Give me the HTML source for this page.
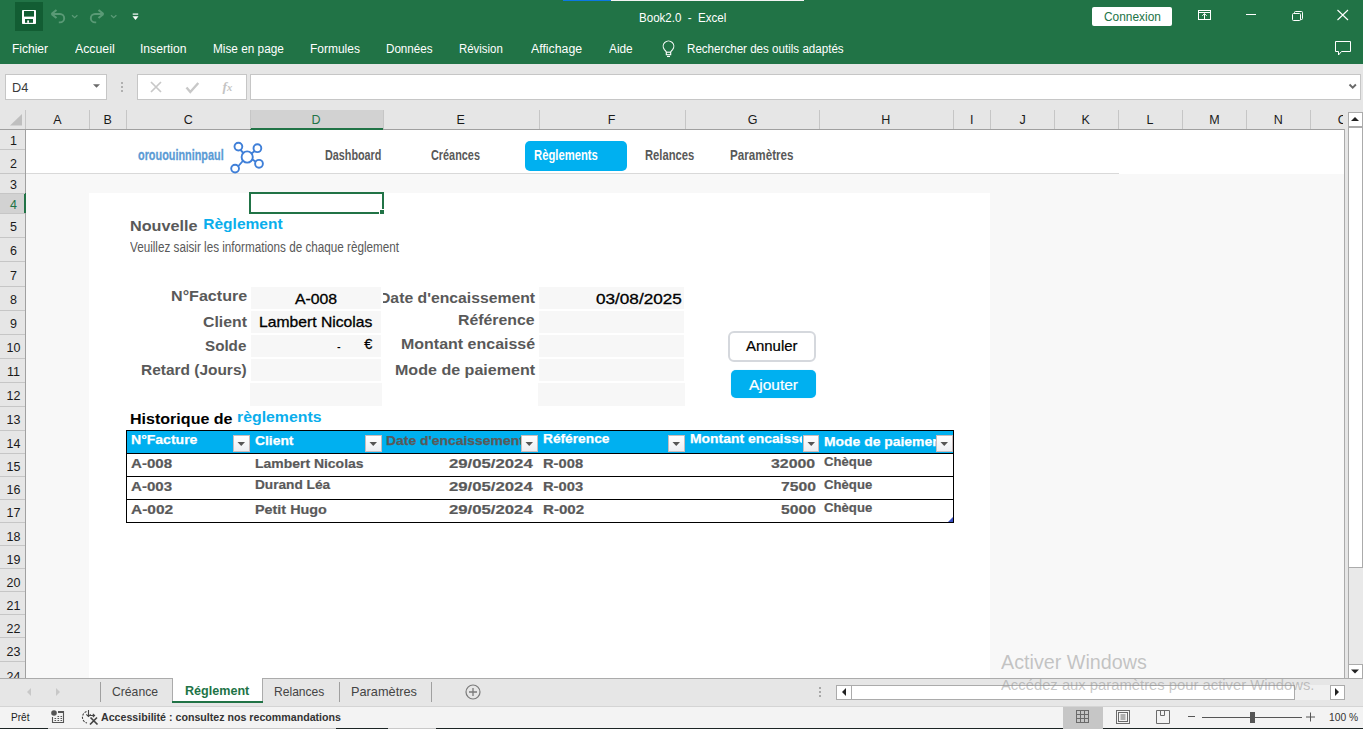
<!DOCTYPE html>
<html><head><meta charset="utf-8">
<style>
*{margin:0;padding:0;box-sizing:border-box}
html,body{width:1363px;height:729px;overflow:hidden;background:#e6e6e6;font-family:"Liberation Sans",sans-serif}
.a{position:absolute}
.t{position:absolute;white-space:pre;line-height:1;transform-origin:0 0}
.clip{position:absolute;left:0;top:0;width:1363px;height:729px}
</style></head><body>
<!-- title bar + ribbon -->
<div class="a" style="left:0;top:0;width:1363px;height:64px;background:#217346"></div>
<div class="a" style="left:563px;top:0;width:48px;height:1px;background:#0b78e3"></div>
<div class="a" style="left:611px;top:0;width:193px;height:1px;background:#f4f4f4"></div>
<div class="a" style="left:15px;top:2px;width:28px;height:29px;background:#125d33"></div>
<svg class="a" style="left:0;top:0" width="1363" height="63">
  <!-- save -->
  <rect x="22" y="10" width="14" height="14" rx="0.8" fill="#fff"/>
  <rect x="24" y="11" width="10" height="5.6" fill="#125d33"/>
  <rect x="25" y="19" width="8" height="3.8" fill="#125d33"/>
  <rect x="27.2" y="20.4" width="1.8" height="2.4" fill="#fff"/>
  <!-- undo -->
  <g fill="none" stroke="#5a9a76" stroke-width="1.9">
    <path d="M51.5 14 L56.5 10 M51.5 14 L56.5 18" stroke-width="2.2"/>
    <path d="M52.5 14 H60 a4.2 4.2 0 0 1 0 8.4 h-1.2"/>
    <path d="M72 15.3 l2.7 2.4 l2.7 -2.4" stroke-width="1.3"/>
    <path d="M103.5 14 L98.5 10 M103.5 14 L98.5 18" stroke-width="2.2"/>
    <path d="M102.5 14 H95 a4.2 4.2 0 0 0 0 8.4 h1.2"/>
    <path d="M111 15.3 l2.7 2.4 l2.7 -2.4" stroke-width="1.3"/>
  </g>
  <!-- customize -->
  <rect x="132.7" y="13.5" width="5.5" height="1.2" fill="#fff"/>
  <path d="M132.5 16.2 h6 l-3 3.8z" fill="#fff"/>
  <!-- ribbon display options -->
  <g fill="none" stroke="#fff" stroke-width="1">
    <rect x="1198.5" y="10.5" width="12" height="9"/>
    <path d="M1198.5 12.5 h12"/>
    <path d="M1204.5 19 v-5.5 M1202.3 15.8 l2.2 -2.2 l2.2 2.2"/>
    <path d="M1246 14.5 h10"/>
    <rect x="1292.5" y="13.5" width="8" height="7" rx="1"/>
    <path d="M1294.5 13.5 v-1 a1 1 0 0 1 1 -1 h6 a1 1 0 0 1 1 1 v6 a1 1 0 0 1 -1 1 h-1"/>
    <path d="M1337.5 10 l10.5 10 M1348 10 l-10.5 10" stroke-width="1.1"/>
    <!-- comment icon -->
    <path d="M1335.5 41.5 h15 v10 h-9 l-3 3.5 v-3.5 h-3z"/>
  </g>
  <!-- lightbulb -->
  <g fill="none" stroke="#fff" stroke-width="1.1">
    <path d="M666.4 51.8 L664.4 49.6 A5.3 5.3 0 1 1 672.6 49.6 L670.6 51.8"/>
    <rect x="666.3" y="52.2" width="4.4" height="2.5"/>
    <path d="M667 56.5 h3"/>
  </g>
</svg>
<div class="a" style="left:1092px;top:7px;width:80px;height:19px;background:#fff;border-radius:2px"></div>

<!-- formula bar area -->
<div class="a" style="left:0;top:64px;width:1363px;height:46px;background:#e6e6e6"></div>
<div class="a" style="left:5px;top:74px;width:102px;height:26px;background:#fff;border:1px solid #c6c6c6"></div>

<div class="a" style="left:137px;top:74px;width:110px;height:26px;background:#fff;border:1px solid #c6c6c6"></div>
<div class="a" style="left:250px;top:74px;width:1111px;height:26px;background:#fff;border:1px solid #c6c6c6"></div>
<svg class="a" style="left:0;top:63px" width="1363" height="47">
  <path d="M93 21.2 h7 l-3.5 3.5z" fill="#6a6a6a"/>
  <g fill="#b0b0b0"><rect x="121" y="19" width="2" height="2"/><rect x="121" y="23" width="2" height="2"/><rect x="121" y="27" width="2" height="2"/></g>
  <g fill="none" stroke="#c8c8c8" stroke-width="1.7">
    <path d="M151 19 l10 10 M161 19 l-10 10"/>
    <path d="M186.5 24.5 l3.8 4.5 l8 -9" stroke-width="2.4"/>
  </g>
  <text x="222.5" y="28" font-family="Liberation Serif" font-style="italic" font-weight="bold" font-size="13.5" fill="#c4c4c4">f</text>
  <text x="227" y="28" font-family="Liberation Serif" font-style="italic" font-weight="bold" font-size="10.5" fill="#c4c4c4">x</text>
  <path d="M1349.5 21.5 l3.2 3.2 l3.2 -3.2" fill="none" stroke="#6a6a6a" stroke-width="1.9"/>
</svg>

<!-- sheet area -->
<div class="a" style="left:26px;top:129px;width:1319px;height:549px;background:#f8f8f8"></div>
<div class="a" style="left:26px;top:129px;width:1319px;height:45px;background:#fff"></div>
<div class="a" style="left:26px;top:173px;width:1093px;height:1px;background:#d9d9d9"></div>
<div class="a" style="left:89px;top:193px;width:901px;height:485px;background:#fff"></div>

<!-- column header -->
<div class="a" style="left:0;top:110px;width:1348px;height:20px;background:#e6e6e6;border-bottom:1px solid #a0a0a0"></div>
<div class="a" style="left:250px;top:110px;width:133px;height:20px;background:#d2d2d2;border-bottom:2px solid #217346"></div>
<svg class="a" style="left:0;top:110px" width="1348" height="20" id="colhdr">
  <path d="M10 15.5 h12 v-11.5z" fill="#bfbfbf"/>
  <g stroke="#c6c6c6" stroke-width="1">
  <path d="M25.5 0 V19"/><path d="M89.5 0 V19"/>
<path d="M126.5 0 V19"/>
<path d="M250.5 0 V19"/>
<path d="M383.5 0 V19"/>
<path d="M539.5 0 V19"/>
<path d="M685.5 0 V19"/>
<path d="M819.5 0 V19"/>
<path d="M953.5 0 V19"/>
<path d="M990.5 0 V19"/>
<path d="M1054.5 0 V19"/>
<path d="M1118.5 0 V19"/>
<path d="M1182.5 0 V19"/>
<path d="M1246.5 0 V19"/>
<path d="M1310.5 0 V19"/>
  </g>
</svg>
<div class="clip" style="clip-path:inset(0 20px 0 0)"><span class="t" style="left:53.30px;top:114.42px;font-size:12.5px;font-weight:normal;color:#1a1a1a;">A</span>
<span class="t" style="left:103.55px;top:114.42px;font-size:12.5px;font-weight:normal;color:#1a1a1a;">B</span>
<span class="t" style="left:183.75px;top:114.42px;font-size:12.5px;font-weight:normal;color:#1a1a1a;">C</span>
<span class="t" style="left:311.50px;top:114.42px;font-size:12.5px;font-weight:normal;color:#217346;">D</span>
<span class="t" style="left:456.50px;top:114.42px;font-size:12.5px;font-weight:normal;color:#1a1a1a;">E</span>
<span class="t" style="left:607.75px;top:114.42px;font-size:12.5px;font-weight:normal;color:#1a1a1a;">F</span>
<span class="t" style="left:747.75px;top:114.42px;font-size:12.5px;font-weight:normal;color:#1a1a1a;">G</span>
<span class="t" style="left:881.30px;top:114.42px;font-size:12.5px;font-weight:normal;color:#1a1a1a;">H</span>
<span class="t" style="left:970.10px;top:114.42px;font-size:12.5px;font-weight:normal;color:#1a1a1a;">I</span>
<span class="t" style="left:1019.60px;top:114.42px;font-size:12.5px;font-weight:normal;color:#1a1a1a;">J</span>
<span class="t" style="left:1081.55px;top:114.42px;font-size:12.5px;font-weight:normal;color:#1a1a1a;">K</span>
<span class="t" style="left:1146.60px;top:114.42px;font-size:12.5px;font-weight:normal;color:#1a1a1a;">L</span>
<span class="t" style="left:1209.15px;top:114.42px;font-size:12.5px;font-weight:normal;color:#1a1a1a;">M</span>
<span class="t" style="left:1273.70px;top:114.42px;font-size:12.5px;font-weight:normal;color:#1a1a1a;">N</span>
<span class="t" style="left:1337.80px;top:114.42px;font-size:12.5px;font-weight:normal;color:#1a1a1a;">O</span></div>

<!-- row header -->
<div class="a" style="left:0;top:130px;width:26px;height:548px;background:#e6e6e6;border-right:1px solid #a0a0a0"></div>
<div class="a" style="left:0;top:193px;width:26px;height:20px;background:#d2d2d2;border-right:2px solid #217346"></div>
<svg class="a" style="left:0;top:129px" width="26" height="549">
  <g stroke="#c6c6c6" stroke-width="1">
  <path d="M0 20.5 H25"/>
<path d="M0 44.5 H25"/>
<path d="M0 64.5 H25"/>
<path d="M0 84.5 H25"/>
<path d="M0 108.5 H25"/>
<path d="M0 132.5 H25"/>
<path d="M0 157.5 H25"/>
<path d="M0 181.5 H25"/>
<path d="M0 205.5 H25"/>
<path d="M0 229.5 H25"/>
<path d="M0 253.5 H25"/>
<path d="M0 277.5 H25"/>
<path d="M0 301.5 H25"/>
<path d="M0 324.5 H25"/>
<path d="M0 347.5 H25"/>
<path d="M0 370.5 H25"/>
<path d="M0 393.5 H25"/>
<path d="M0 416.5 H25"/>
<path d="M0 439.5 H25"/>
<path d="M0 462.5 H25"/>
<path d="M0 485.5 H25"/>
<path d="M0 508.5 H25"/>
<path d="M0 532.5 H25"/>
  </g>
</svg>
<div class="clip" style="clip-path:inset(129px 0 51px 0)"><span class="t" style="left:10.00px;top:135.27px;font-size:12.5px;font-weight:normal;color:#1a1a1a;">1</span>
<span class="t" style="left:10.00px;top:157.67px;font-size:12.5px;font-weight:normal;color:#1a1a1a;">2</span>
<span class="t" style="left:10.00px;top:179.47px;font-size:12.5px;font-weight:normal;color:#1a1a1a;">3</span>
<span class="t" style="left:10.00px;top:199.32px;font-size:12.5px;font-weight:normal;color:#217346;">4</span>
<span class="t" style="left:10.00px;top:221.22px;font-size:12.5px;font-weight:normal;color:#1a1a1a;">5</span>
<span class="t" style="left:10.00px;top:245.17px;font-size:12.5px;font-weight:normal;color:#1a1a1a;">6</span>
<span class="t" style="left:10.00px;top:269.87px;font-size:12.5px;font-weight:normal;color:#1a1a1a;">7</span>
<span class="t" style="left:10.00px;top:294.47px;font-size:12.5px;font-weight:normal;color:#1a1a1a;">8</span>
<span class="t" style="left:10.00px;top:318.42px;font-size:12.5px;font-weight:normal;color:#1a1a1a;">9</span>
<span class="t" style="left:6.52px;top:342.37px;font-size:12.5px;font-weight:normal;color:#1a1a1a;">10</span>
<span class="t" style="left:6.99px;top:366.47px;font-size:12.5px;font-weight:normal;color:#1a1a1a;">11</span>
<span class="t" style="left:6.52px;top:390.47px;font-size:12.5px;font-weight:normal;color:#1a1a1a;">12</span>
<span class="t" style="left:6.52px;top:414.47px;font-size:12.5px;font-weight:normal;color:#1a1a1a;">13</span>
<span class="t" style="left:6.52px;top:438.02px;font-size:12.5px;font-weight:normal;color:#1a1a1a;">14</span>
<span class="t" style="left:6.52px;top:461.02px;font-size:12.5px;font-weight:normal;color:#1a1a1a;">15</span>
<span class="t" style="left:6.52px;top:484.07px;font-size:12.5px;font-weight:normal;color:#1a1a1a;">16</span>
<span class="t" style="left:6.52px;top:506.87px;font-size:12.5px;font-weight:normal;color:#1a1a1a;">17</span>
<span class="t" style="left:6.52px;top:530.72px;font-size:12.5px;font-weight:normal;color:#1a1a1a;">18</span>
<span class="t" style="left:6.52px;top:554.02px;font-size:12.5px;font-weight:normal;color:#1a1a1a;">19</span>
<span class="t" style="left:6.52px;top:576.87px;font-size:12.5px;font-weight:normal;color:#1a1a1a;">20</span>
<span class="t" style="left:6.52px;top:599.82px;font-size:12.5px;font-weight:normal;color:#1a1a1a;">21</span>
<span class="t" style="left:6.52px;top:622.92px;font-size:12.5px;font-weight:normal;color:#1a1a1a;">22</span>
<span class="t" style="left:6.52px;top:646.12px;font-size:12.5px;font-weight:normal;color:#1a1a1a;">23</span>
<span class="t" style="left:6.52px;top:670.72px;font-size:12.5px;font-weight:normal;color:#1a1a1a;">24</span></div>

<!-- right grid border + vertical scrollbar -->
<div class="a" style="left:1344px;top:129px;width:1px;height:549px;background:#ababab"></div>
<div class="a" style="left:1345px;top:110px;width:18px;height:568px;background:#e6e6e6"></div>
<div class="a" style="left:1348px;top:112px;width:15px;height:566px;background:#e9e9e9;border-left:1px solid #ababab"></div>
<div class="a" style="left:1348px;top:112px;width:15px;height:15px;background:#fff;border:1px solid #ababab"></div>
<div class="a" style="left:1348px;top:127px;width:15px;height:441px;background:#fff;border:1px solid #ababab"></div>
<div class="a" style="left:1348px;top:664px;width:15px;height:15px;background:#fff;border:1px solid #ababab"></div>
<svg class="a" style="left:1348px;top:112px" width="15" height="566">
  <path d="M3 9 h8 l-4 -4z" fill="#222"/>
  <path d="M3 557.5 h8 l-4 4z" fill="#222"/>
</svg>

<!-- header band: logo -->
<svg class="a" style="left:225px;top:138px" width="45" height="40">
  <g fill="none" stroke="#3f7fd8" stroke-width="1.9">
    <circle cx="22.2" cy="19" r="5.6"/>
    <circle cx="13.4" cy="8.6" r="3.9"/>
    <circle cx="32.4" cy="10.2" r="3.9"/>
    <circle cx="34" cy="25.8" r="3.9"/>
    <circle cx="10.1" cy="30.6" r="3.9"/>
    <path d="M15.5 11.8 L18.3 15 M30 12.8 L26.5 15.5 M31 24 L27.5 21.5 M13 28.5 L17.8 23"/>
  </g>
</svg>
<div class="a" style="left:525px;top:141px;width:102px;height:30px;background:#00b0f0;border-radius:5px"></div>

<!-- input boxes -->
<div class="a" style="left:251px;top:287px;width:130px;height:22px;background:#f7f7f7"></div>
<div class="a" style="left:251px;top:311px;width:130px;height:22px;background:#f7f7f7"></div>
<div class="a" style="left:251px;top:335px;width:130px;height:22px;background:#f7f7f7"></div>
<div class="a" style="left:251px;top:359px;width:130px;height:22px;background:#f7f7f7"></div>
<div class="a" style="left:250px;top:383px;width:132px;height:23px;background:#f7f7f7"></div>
<div class="a" style="left:539px;top:287px;width:145px;height:22px;background:#f7f7f7"></div>
<div class="a" style="left:539px;top:311px;width:145px;height:22px;background:#f7f7f7"></div>
<div class="a" style="left:539px;top:335px;width:145px;height:22px;background:#f7f7f7"></div>
<div class="a" style="left:539px;top:359px;width:145px;height:22px;background:#f7f7f7"></div>
<div class="a" style="left:538px;top:383px;width:147px;height:23px;background:#f7f7f7"></div>

<!-- selection -->
<div class="a" style="left:249px;top:192px;width:135px;height:22px;border:2px solid #217346"></div>
<div class="a" style="left:379px;top:209px;width:6px;height:6px;background:#217346;border:1px solid #fff"></div>

<!-- buttons -->
<div class="a" style="left:728px;top:331px;width:88px;height:31px;background:#fff;border:2px solid #d5d8dd;border-radius:6px"></div>
<div class="a" style="left:731px;top:370px;width:85px;height:28px;background:#00b0f0;border-radius:5px;box-shadow:0 0 1px #8fdcf8"></div>

<!-- table -->
<div class="a" style="left:126px;top:430px;width:828px;height:93px;background:#fff;border:1px solid #000"></div>
<div class="a" style="left:127px;top:431px;width:826px;height:22px;background:#00b0f0"></div>
<div class="a" style="left:127px;top:453px;width:826px;height:1px;background:#000"></div>
<div class="a" style="left:127px;top:476px;width:826px;height:1px;background:#000"></div>
<div class="a" style="left:127px;top:499px;width:826px;height:1px;background:#000"></div>
<svg class="a" style="left:948px;top:517px" width="6" height="6"><path d="M5 0 V5 H0z" fill="#3a4fc4"/></svg>

<span class="t" style="left:639.28px;top:12.22px;font-size:12.5px;font-weight:normal;color:#ffffff;transform:scaleX(0.9244);">Book2.0  -  Excel</span>
<span class="t" style="left:1103.50px;top:11.12px;font-size:12.5px;font-weight:normal;color:#217346;transform:scaleX(0.9513);">Connexion</span>
<span class="t" style="left:12.04px;top:43.12px;font-size:12.5px;font-weight:normal;color:#ffffff;transform:scaleX(0.9603);">Fichier</span>
<span class="t" style="left:74.80px;top:43.12px;font-size:12.5px;font-weight:normal;color:#ffffff;transform:scaleX(0.9844);">Accueil</span>
<span class="t" style="left:140.03px;top:43.12px;font-size:12.5px;font-weight:normal;color:#ffffff;transform:scaleX(0.9704);">Insertion</span>
<span class="t" style="left:213.06px;top:43.12px;font-size:12.5px;font-weight:normal;color:#ffffff;transform:scaleX(0.9434);">Mise en page</span>
<span class="t" style="left:310.24px;top:43.12px;font-size:12.5px;font-weight:normal;color:#ffffff;transform:scaleX(0.9578);">Formules</span>
<span class="t" style="left:386.37px;top:43.12px;font-size:12.5px;font-weight:normal;color:#ffffff;transform:scaleX(0.9306);">Données</span>
<span class="t" style="left:459.49px;top:43.12px;font-size:12.5px;font-weight:normal;color:#ffffff;transform:scaleX(0.9131);">Révision</span>
<span class="t" style="left:530.70px;top:43.12px;font-size:12.5px;font-weight:normal;color:#ffffff;transform:scaleX(0.9857);">Affichage</span>
<span class="t" style="left:609.30px;top:43.12px;font-size:12.5px;font-weight:normal;color:#ffffff;transform:scaleX(0.9455);">Aide</span>
<span class="t" style="left:687.37px;top:43.12px;font-size:12.5px;font-weight:normal;color:#ffffff;transform:scaleX(0.9278);">Rechercher des outils adaptés</span>
<span class="t" style="left:11.98px;top:82.02px;font-size:12.5px;font-weight:normal;color:#3a3a3a;transform:scaleX(1.0182);">D4</span>
<span class="t" style="left:138.00px;top:146.58px;font-size:15.5px;font-weight:bold;color:#5B9BD5;-webkit-text-stroke:0.3px #5B9BD5;transform:scaleX(0.7011);">orououinninpaul</span>
<span class="t" style="left:325.30px;top:146.98px;font-size:15.5px;font-weight:bold;color:#595959;transform:scaleX(0.6969);">Dashboard</span>
<span class="t" style="left:430.60px;top:146.98px;font-size:15.5px;font-weight:bold;color:#595959;transform:scaleX(0.7011);">Créances</span>
<span class="t" style="left:533.77px;top:146.98px;font-size:15.5px;font-weight:bold;color:#ffffff;transform:scaleX(0.7270);">Règlements</span>
<span class="t" style="left:645.27px;top:146.98px;font-size:15.5px;font-weight:bold;color:#595959;transform:scaleX(0.7254);">Relances</span>
<span class="t" style="left:730.05px;top:146.98px;font-size:15.5px;font-weight:bold;color:#595959;transform:scaleX(0.7522);">Paramètres</span>
<span class="t" style="left:129.55px;top:217.58px;font-size:15.5px;font-weight:bold;color:#595959;transform:scaleX(1.0456);">Nouvelle</span>
<span class="t" style="left:203.30px;top:216.08px;font-size:15.5px;font-weight:bold;color:#0AAEEC;">Règlement</span>
<span class="t" style="left:129.90px;top:240.52px;font-size:13.8px;font-weight:normal;color:#595959;transform:scaleX(0.8474);">Veuillez saisir les informations de chaque règlement</span>
<span class="t" style="left:170.53px;top:287.90px;font-size:15px;font-weight:bold;color:#595959;transform:scaleX(1.0736);">N°Facture</span>
<span class="t" style="left:202.50px;top:314.00px;font-size:15px;font-weight:bold;color:#595959;transform:scaleX(1.0535);">Client</span>
<span class="t" style="left:205.40px;top:338.30px;font-size:15px;font-weight:bold;color:#595959;transform:scaleX(1.0124);">Solde</span>
<span class="t" style="left:140.77px;top:362.10px;font-size:15px;font-weight:bold;color:#595959;transform:scaleX(1.0303);">Retard (Jours)</span>
<span class="t" style="left:295.00px;top:291.52px;font-size:14.5px;font-weight:normal;color:#000;-webkit-text-stroke:0.3px #000;transform:scaleX(1.0873);">A-008</span>
<span class="t" style="left:259.22px;top:315.02px;font-size:14.5px;font-weight:normal;color:#000;-webkit-text-stroke:0.3px #000;transform:scaleX(1.0820);">Lambert Nicolas</span>
<span class="t" style="left:337.00px;top:339.72px;font-size:14.5px;font-weight:normal;color:#000;transform:scaleX(0.7600);">-</span>
<span class="t" style="left:364.30px;top:337.32px;font-size:14.5px;font-weight:normal;color:#000;-webkit-text-stroke:0.3px #000;">€</span>
<span class="t" style="left:458.44px;top:311.90px;font-size:15px;font-weight:bold;color:#595959;transform:scaleX(1.0562);">Référence</span>
<span class="t" style="left:400.93px;top:336.10px;font-size:15px;font-weight:bold;color:#595959;transform:scaleX(1.0657);">Montant encaissé</span>
<span class="t" style="left:394.63px;top:362.40px;font-size:15px;font-weight:bold;color:#595959;transform:scaleX(1.0704);">Mode de paiement</span>
<span class="t" style="left:595.70px;top:291.72px;font-size:14.5px;font-weight:normal;color:#000;-webkit-text-stroke:0.3px #000;transform:scaleX(1.1820);">03/08/2025</span>
<span class="t" style="left:745.80px;top:339.47px;font-size:14.8px;font-weight:normal;color:#000;-webkit-text-stroke:0.2px #000;transform:scaleX(1.0103);">Annuler</span>
<span class="t" style="left:749.10px;top:378.27px;font-size:14.8px;font-weight:normal;color:#fff;-webkit-text-stroke:0.2px #fff;transform:scaleX(1.0457);">Ajouter</span>
<span class="t" style="left:129.66px;top:410.78px;font-size:15.5px;font-weight:bold;color:#000;transform:scaleX(1.0354);">Historique de</span>
<span class="t" style="left:237.48px;top:408.68px;font-size:15.5px;font-weight:bold;color:#0AAEEC;transform:scaleX(1.0212);">règlements</span>
<span class="t" style="left:130.70px;top:432.57px;font-size:13.5px;font-weight:bold;color:#fff;-webkit-text-stroke:0.25px #fff;transform:scaleX(1.0387);">N°Facture</span>
<span class="t" style="left:254.60px;top:434.07px;font-size:13.5px;font-weight:bold;color:#fff;-webkit-text-stroke:0.25px #fff;transform:scaleX(1.0262);">Client</span>
<span class="t" style="left:542.60px;top:432.37px;font-size:13.5px;font-weight:bold;color:#fff;-webkit-text-stroke:0.25px #fff;transform:scaleX(1.0171);">Référence</span>
<span class="t" style="left:130.50px;top:457.37px;font-size:13.5px;font-weight:bold;color:#595959;-webkit-text-stroke:0.2px #595959;transform:scaleX(1.1164);">A-008</span>
<span class="t" style="left:254.60px;top:457.37px;font-size:13.5px;font-weight:bold;color:#595959;-webkit-text-stroke:0.2px #595959;transform:scaleX(1.0332);">Lambert Nicolas</span>
<span class="t" style="left:449.40px;top:457.37px;font-size:13.5px;font-weight:bold;color:#595959;-webkit-text-stroke:0.2px #595959;transform:scaleX(1.2387);">29/05/2024</span>
<span class="t" style="left:542.60px;top:457.37px;font-size:13.5px;font-weight:bold;color:#595959;-webkit-text-stroke:0.2px #595959;transform:scaleX(1.0896);">R-008</span>
<span class="t" style="left:771.40px;top:457.37px;font-size:13.5px;font-weight:bold;color:#595959;-webkit-text-stroke:0.2px #595959;transform:scaleX(1.1774);">32000</span>
<span class="t" style="left:823.80px;top:454.67px;font-size:13.5px;font-weight:bold;color:#595959;-webkit-text-stroke:0.2px #595959;transform:scaleX(0.9741);">Chèque</span>
<span class="t" style="left:130.50px;top:480.37px;font-size:13.5px;font-weight:bold;color:#595959;-webkit-text-stroke:0.2px #595959;transform:scaleX(1.1164);">A-003</span>
<span class="t" style="left:254.60px;top:478.37px;font-size:13.5px;font-weight:bold;color:#595959;-webkit-text-stroke:0.2px #595959;transform:scaleX(1.0113);">Durand Léa</span>
<span class="t" style="left:449.40px;top:480.37px;font-size:13.5px;font-weight:bold;color:#595959;-webkit-text-stroke:0.2px #595959;transform:scaleX(1.2387);">29/05/2024</span>
<span class="t" style="left:542.60px;top:480.37px;font-size:13.5px;font-weight:bold;color:#595959;-webkit-text-stroke:0.2px #595959;transform:scaleX(1.0896);">R-003</span>
<span class="t" style="left:780.70px;top:480.37px;font-size:13.5px;font-weight:bold;color:#595959;-webkit-text-stroke:0.2px #595959;transform:scaleX(1.1618);">7500</span>
<span class="t" style="left:823.80px;top:477.67px;font-size:13.5px;font-weight:bold;color:#595959;-webkit-text-stroke:0.2px #595959;transform:scaleX(0.9741);">Chèque</span>
<span class="t" style="left:130.50px;top:503.47px;font-size:13.5px;font-weight:bold;color:#595959;-webkit-text-stroke:0.2px #595959;transform:scaleX(1.1472);">A-002</span>
<span class="t" style="left:254.60px;top:503.47px;font-size:13.5px;font-weight:bold;color:#595959;-webkit-text-stroke:0.2px #595959;transform:scaleX(1.0647);">Petit Hugo</span>
<span class="t" style="left:449.40px;top:503.47px;font-size:13.5px;font-weight:bold;color:#595959;-webkit-text-stroke:0.2px #595959;transform:scaleX(1.2387);">29/05/2024</span>
<span class="t" style="left:542.60px;top:503.47px;font-size:13.5px;font-weight:bold;color:#595959;-webkit-text-stroke:0.2px #595959;transform:scaleX(1.1197);">R-002</span>
<span class="t" style="left:780.70px;top:503.47px;font-size:13.5px;font-weight:bold;color:#595959;-webkit-text-stroke:0.2px #595959;transform:scaleX(1.1618);">5000</span>
<span class="t" style="left:823.80px;top:500.77px;font-size:13.5px;font-weight:bold;color:#595959;-webkit-text-stroke:0.2px #595959;transform:scaleX(0.9741);">Chèque</span>
<div class="clip" style="clip-path:inset(0 0 0 383px)"><span class="t" style="left:378.63px;top:290.30px;font-size:15px;font-weight:bold;color:#595959;transform:scaleX(1.0500);">Date d'encaissement</span></div>
<div class="clip" style="clip-path:inset(0 842px 0 0)"><span class="t" style="left:386.40px;top:434.07px;font-size:13.5px;font-weight:bold;color:#595959;-webkit-text-stroke:0.25px #595959;transform:scaleX(1.0300);">Date d'encaissement</span></div>
<div class="clip" style="clip-path:inset(0 561px 0 0)"><span class="t" style="left:689.90px;top:432.47px;font-size:13.5px;font-weight:bold;color:#fff;-webkit-text-stroke:0.25px #fff;transform:scaleX(1.0300);">Montant encaissé</span></div>
<div class="clip" style="clip-path:inset(0 427px 0 0)"><span class="t" style="left:823.80px;top:434.57px;font-size:13.5px;font-weight:bold;color:#fff;-webkit-text-stroke:0.25px #fff;transform:scaleX(1.0300);">Mode de paiement</span></div>

<!-- filter buttons -->
<div class="a" style="left:233px;top:435px;width:17px;height:17px;border:1px solid #c9bdbd;background:linear-gradient(#ffffff,#eceef2)"></div><svg class="a" style="left:237px;top:442px" width="9" height="5"><path d="M0.5 0 h7.5 l-3.75 4z" fill="#555"/></svg>
<div class="a" style="left:365px;top:435px;width:17px;height:17px;border:1px solid #c9bdbd;background:linear-gradient(#ffffff,#eceef2)"></div><svg class="a" style="left:369px;top:442px" width="9" height="5"><path d="M0.5 0 h7.5 l-3.75 4z" fill="#555"/></svg>
<div class="a" style="left:521px;top:435px;width:17px;height:17px;border:1px solid #c9bdbd;background:linear-gradient(#ffffff,#eceef2)"></div><svg class="a" style="left:525px;top:442px" width="9" height="5"><path d="M0.5 0 h7.5 l-3.75 4z" fill="#555"/></svg>
<div class="a" style="left:668px;top:435px;width:17px;height:17px;border:1px solid #c9bdbd;background:linear-gradient(#ffffff,#eceef2)"></div><svg class="a" style="left:672px;top:442px" width="9" height="5"><path d="M0.5 0 h7.5 l-3.75 4z" fill="#555"/></svg>
<div class="a" style="left:803px;top:435px;width:16px;height:17px;border:1px solid #c9bdbd;background:linear-gradient(#ffffff,#eceef2)"></div><svg class="a" style="left:807px;top:442px" width="9" height="5"><path d="M0.5 0 h7.5 l-3.75 4z" fill="#555"/></svg>
<div class="a" style="left:936px;top:435px;width:17px;height:17px;border:1px solid #c9bdbd;background:linear-gradient(#ffffff,#eceef2)"></div><svg class="a" style="left:940px;top:442px" width="9" height="5"><path d="M0.5 0 h7.5 l-3.75 4z" fill="#555"/></svg>

<!-- sheet tabs bar -->
<div class="a" style="left:0;top:678px;width:1363px;height:28px;background:#e6e6e6;border-top:1px solid #ababab"></div>
<div class="a" style="left:172px;top:678px;width:91px;height:25px;background:#fff;border-left:1px solid #ababab;border-right:1px solid #ababab"></div>
<div class="a" style="left:172px;top:701px;width:91px;height:2px;background:#217346"></div>
<div class="a" style="left:100px;top:682px;width:1px;height:20px;background:#a0a0a0"></div>
<div class="a" style="left:339px;top:682px;width:1px;height:20px;background:#a0a0a0"></div>
<div class="a" style="left:431px;top:682px;width:1px;height:20px;background:#a0a0a0"></div>
<svg class="a" style="left:0;top:678px" width="1363" height="28">
  <path d="M31 10 v8 l-4 -4z" fill="#c8c8c8"/>
  <path d="M56 10 v8 l4 -4z" fill="#c8c8c8"/>
  <circle cx="473" cy="14" r="7" fill="none" stroke="#7a7a7a" stroke-width="1.2"/>
  <path d="M473 10 v8 M469 14 h8" stroke="#7a7a7a" stroke-width="1.3"/>
  <g fill="#a8a8a8"><rect x="819" y="9" width="2" height="2"/><rect x="819" y="13" width="2" height="2"/><rect x="819" y="17" width="2" height="2"/></g>
</svg>
<div class="a" style="left:851px;top:685px;width:480px;height:15px;background:#f0f0f0"></div>
<div class="a" style="left:836px;top:685px;width:16px;height:15px;background:#fff;border:1px solid #ababab"></div>
<div class="a" style="left:851px;top:685px;width:444px;height:15px;background:#fff;border:1px solid #ababab"></div>
<div class="a" style="left:1330px;top:685px;width:15px;height:15px;background:#fff;border:1px solid #ababab"></div>
<svg class="a" style="left:0;top:678px" width="1363" height="28">
  <path d="M846 10 v8 l-4 -4z" fill="#222"/>
  <path d="M1335 10 v8 l4 -4z" fill="#222"/>
</svg>

<!-- status bar -->
<div class="a" style="left:0;top:706px;width:1363px;height:23px;background:#f3f3f3;border-top:1px solid #d4d4d4"></div>
<div class="a" style="left:1063px;top:707px;width:40px;height:21px;background:#c6c6c6"></div>
<svg class="a" style="left:0;top:706px" width="1363" height="23">
  <!-- macro icon -->
  <circle cx="54" cy="7" r="2.8" fill="#555"/>
  <rect x="58" y="5" width="6" height="2" fill="#555"/>
  <path d="M63.5 5 V16.5 H52.5 V11" fill="none" stroke="#555" stroke-width="1.1"/>
  <g fill="#555">
    <rect x="57.5" y="10" width="1.6" height="1"/><rect x="60.5" y="10" width="1.6" height="1"/>
    <rect x="54.5" y="12" width="1.6" height="1"/><rect x="57.5" y="12" width="1.6" height="1"/><rect x="60.5" y="12" width="1.6" height="1"/>
    <rect x="54.5" y="14" width="1.6" height="1"/><rect x="57.5" y="14" width="1.6" height="1"/><rect x="60.5" y="14" width="1.6" height="1"/>
  </g>
  <!-- accessibility icon -->
  <g fill="none" stroke="#444" stroke-width="1.1">
    <path d="M86.5 5.5 a6 6 0 0 0 0.5 11.5" stroke-dasharray="2.2 1.2"/>
    <path d="M88.5 4 v6.5 M86.3 8.3 l2.2 2.2 l2.2 -2.2"/>
    <path d="M90 9.5 h4.5 M92.8 7.8 l1.8 1.7 l-1.8 1.7"/>
    <path d="M90.5 11.5 l7 7 M97 11.5 l-7 7" stroke-width="1.7"/>
  </g>
  <!-- view icons -->
  <g fill="none" stroke="#6a6a6a" stroke-width="1">
    <rect x="1076.5" y="4.5" width="12" height="12"/>
    <path d="M1080.5 4.5 v12 M1084.5 4.5 v12 M1076.5 8.5 h12 M1076.5 12.5 h12"/>
    <rect x="1116.5" y="4.5" width="13" height="13"/>
    <rect x="1118.5" y="6.5" width="9" height="9"/>
    <path d="M1120.5 9 h5 M1120.5 11 h5 M1120.5 13 h5"/>
    <path d="M1156.5 4.5 h13 v13 h-13z M1160.5 4.5 v5 h4 v-5"/>
  </g>
  <path d="M1188 10.5 h7" stroke="#555" stroke-width="1"/>
  <path d="M1202 11.5 h100" stroke="#555" stroke-width="1"/>
  <rect x="1250" y="6" width="5" height="11" fill="#555"/>
  <path d="M1306 11 h9 M1310.5 6.5 v9" stroke="#555" stroke-width="1"/>
</svg>
<div class="a" style="left:0;top:728px;width:1363px;height:1px;background:#1c2424"></div>
<div class="a" style="left:48px;top:728px;width:288px;height:1px;background:#c8c8c8"></div>
<div class="a" style="left:388px;top:728px;width:48px;height:1px;background:#c8c8c8"></div>
<div class="a" style="left:1063px;top:728px;width:40px;height:1px;background:#c6c6c6"></div>
<span class="t" style="left:112.30px;top:685.19px;font-size:13px;font-weight:normal;color:#444;transform:scaleX(0.9365);">Créance</span>
<span class="t" style="left:184.90px;top:684.49px;font-size:13px;font-weight:bold;color:#217346;transform:scaleX(0.9668);">Réglement</span>
<span class="t" style="left:274.27px;top:685.19px;font-size:13px;font-weight:normal;color:#444;transform:scaleX(0.9293);">Relances</span>
<span class="t" style="left:351.02px;top:685.19px;font-size:13px;font-weight:normal;color:#444;transform:scaleX(0.9807);">Paramètres</span>
<span class="t" style="left:11.40px;top:711.66px;font-size:11.5px;font-weight:normal;color:#222;transform:scaleX(0.8769);">Prêt</span>
<span class="t" style="left:101.20px;top:711.66px;font-size:11.5px;font-weight:bold;color:#333;transform:scaleX(0.9249);">Accessibilité : consultez nos recommandations</span>
<span class="t" style="left:1328.60px;top:711.66px;font-size:11.5px;font-weight:normal;color:#333;transform:scaleX(0.8925);">100 %</span>
<span class="t" style="left:1000.50px;top:652.69px;font-size:19.5px;font-weight:normal;color:rgba(150,150,150,0.55);transform:scaleX(1.0120);">Activer Windows</span>
<span class="t" style="left:1000.50px;top:678.15px;font-size:14px;font-weight:normal;color:rgba(150,150,150,0.55);transform:scaleX(1.0573);">Accédez aux paramètres pour activer Windows.</span>
</body></html>
